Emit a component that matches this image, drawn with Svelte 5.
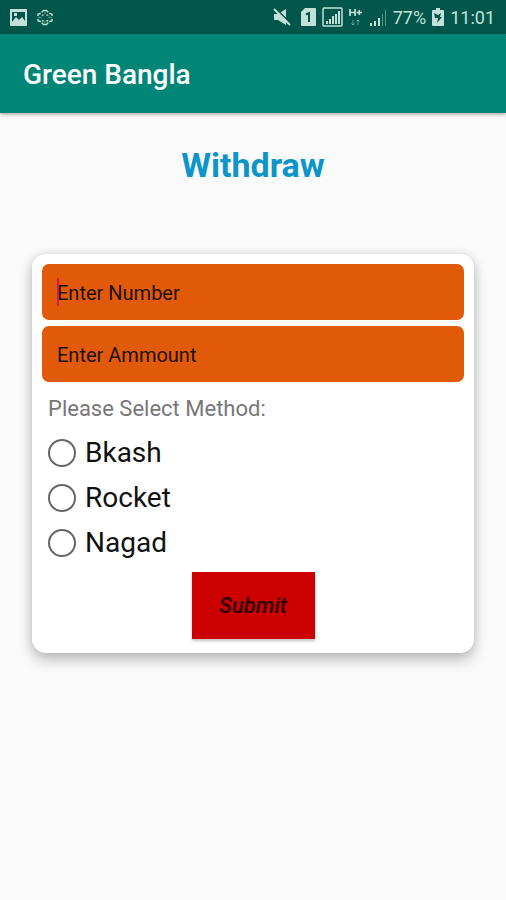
<script lang="ts">
  let number = "";
  let amount = "";
  let method = "";
  let numberActive = true;

  const methods = ["Bkash", "Rocket", "Nagad"];
</script>

<div class="status-bar">
  <div class="status-group left">
    <svg width="17" height="17" viewBox="0 0 17 17">
      <path
        fill="currentColor"
        fill-rule="evenodd"
        d="M1 0h15a1 1 0 0 1 1 1v15a1 1 0 0 1-1 1H1a1 1 0 0 1-1-1V1a1 1 0 0 1 1-1zM2 3v10l4-5 3 3 3-3 3 4V3zM4 4h3v3H4z"
      />
    </svg>
    <svg width="16" height="17" viewBox="0 0 17 17" fill="none" stroke="currentColor" stroke-width="1.500">
      <path d="M5 3l2-2h3l2 2M5 14l2 2h3l2-2M1 7V5l3-1M16 7V5l-3-1M1 10v2l3 1M16 10v2l-3 1M5 6h2M10 6h2M5 12h2M10 12h2" />
      <path d="M1 8.500h4M12 8.500h4M8.500 3v2M8.500 12v2" stroke-opacity="0.4" />
    </svg>
  </div>

  <div class="status-group right">
    <svg width="18" height="18" viewBox="0 0 18 18">
      <path fill="currentColor" d="M1 6h4l8-5v16l-8-5H1z" />
      <path d="M2 0l16 16" stroke="#00564a" stroke-width="2" />
      <path d="M1 1l16 16" stroke="currentColor" stroke-width="2" />
    </svg>
    <svg class="sim" width="15" height="18" viewBox="0 0 15 18">
      <path fill="currentColor" d="M4 0h10a1 1 0 0 1 1 1v16a1 1 0 0 1-1 1H1a1 1 0 0 1-1-1V4z" />
      <path d="M5 6.500L8 5v9" fill="none" stroke="#00564a" stroke-width="2" />
    </svg>
    <svg width="21" height="20" viewBox="0 0 21 20">
      <rect x="1" y="1" width="19" height="18" rx="1" fill="none" stroke="currentColor" stroke-width="1.500" />
      <path fill="currentColor" d="M4 14h2v3H4zM7 12h2v5H7zM10 9h2v8h-2zM13 7h2v10h-2zM16 4h2v13h-2z" />
    </svg>
    <svg class="data" width="13" height="18" viewBox="0 0 13 18" fill="none" stroke="currentColor">
      <path stroke-width="1.700" d="M1 1v7M6 1v7M1 4.500h5M7.500 4.500H13M10.300 2v5" />
      <path stroke-width="1" stroke-opacity="0.5" d="M4 12v5M2.500 15.500L4 17l1.500-1.500M9 17v-5M7.500 13.500L9 12l1.500 1.500" />
    </svg>
    <svg class="signal" width="17" height="17" viewBox="0 0 17 17" fill="currentColor">
      <path d="M0 14h2v3H0zM4 12h2v5H4zM8 9h2v8H8z" />
      <path fill-opacity="0.45" d="M12 5h1v12h-1zM15 1h1v16h-1z" />
    </svg>
    <span class="battery-level">77%</span>
    <svg width="12" height="18" viewBox="0 0 12 18">
      <path fill="currentColor" d="M4 0h4v2h3a1 1 0 0 1 1 1v14a1 1 0 0 1-1 1H1a1 1 0 0 1-1-1V3a1 1 0 0 1 1-1h3z" />
      <path fill="#00564a" d="M2 5l4 2 3-2-1 4h2l-5 6 1-5H3z" />
    </svg>
    <span class="clock">11:01</span>
  </div>
</div>

<header class="app-bar">Green Bangla</header>

<main>
  <h1>Withdraw</h1>

  <form class="card" on:submit|preventDefault>
    <div class="field">
      <input
        type="text"
        inputmode="numeric"
        placeholder="Enter Number"
        aria-label="Enter Number"
        bind:value={number}
        on:focus={() => (numberActive = false)}
      />
      {#if numberActive && !number}
        <span class="caret"></span>
      {/if}
    </div>
    <div class="field">
      <input
        type="text"
        inputmode="decimal"
        placeholder="Enter Ammount"
        aria-label="Enter Ammount"
        bind:value={amount}
        on:focus={() => (numberActive = false)}
      />
    </div>

    <fieldset>
      <legend>Please Select Method:</legend>
      {#each methods as name}
        <label>
          <input type="radio" name="method" value={name} bind:group={method} />
          {name}
        </label>
      {/each}
    </fieldset>

    <button type="submit">Submit</button>
  </form>
</main>

<style>
  :global(body) {
    background: #fafafa;
    font-family: Roboto, "Liberation Sans", sans-serif;
  }

  .status-bar {
    display: flex;
    justify-content: space-between;
    align-items: center;
    height: 34px;
    padding: 0 11px 0 10px;
    background: #00564a;
    color: #c5e0da;
    font-size: 18px;
  }

  .status-group {
    display: flex;
    align-items: center;
  }

  .left {
    gap: 10px;
  }

  .right {
    gap: 6px;
  }

  .sim {
    margin-left: 4px;
  }

  .signal {
    margin-left: 2px;
  }

  .app-bar {
    padding: 2px 23px 0;
    background: #008577;
    color: #fff;
    font-size: 28px;
    font-weight: 500;
    line-height: 77px;
    box-shadow: 0 1px 4px rgba(0, 0, 0, 0.4);
  }

  main {
    padding: 32px 32px;
  }

  h1 {
    margin: 0 0 68px;
    color: #0d95c9;
    font-size: 34px;
    font-weight: 700;
    line-height: 41px;
    text-align: center;
  }

  .card {
    display: flex;
    flex-direction: column;
    gap: 6px;
    padding: 10px 10px 14px;
    border-radius: 14px;
    background: #fff;
    box-shadow:
      0 7px 14px rgba(0, 0, 0, 0.24),
      0 0 10px rgba(0, 0, 0, 0.1);
  }

  .field {
    position: relative;
  }

  .field input {
    display: block;
    width: 100%;
    height: 56px;
    padding: 2px 15px 0;
    box-sizing: border-box;
    border: 0;
    border-radius: 7px;
    outline: none;
    background: #e05a0a;
    color: #1a0a00;
    caret-color: #d81b60;
    font-family: inherit;
    font-size: 20px;
  }

  .field input::placeholder {
    color: #1f1008;
    opacity: 1;
  }

  .caret {
    position: absolute;
    top: 14px;
    left: 15px;
    width: 2px;
    height: 28px;
    background: #d8174e;
  }

  fieldset {
    margin: 0;
    padding: 0 6px 1px;
    border: 0;
  }

  legend {
    padding: 5px 0;
    color: #777;
    font-size: 22px;
    line-height: 32px;
  }

  label {
    display: flex;
    align-items: center;
    gap: 9px;
    color: #111;
    font-size: 28px;
    line-height: 45px;
  }

  input[type="radio"] {
    appearance: none;
    width: 28px;
    height: 28px;
    margin: 0;
    border: 2px solid #666;
    border-radius: 50%;
  }

  input[type="radio"]:checked {
    border-color: #d81b60;
    background: radial-gradient(#d81b60 50%, transparent 55%);
  }

  button {
    align-self: center;
    min-width: 123px;
    height: 67px;
    padding: 0 20px;
    border: 0;
    background: #cc0000;
    color: #2a0000;
    font-family: inherit;
    font-size: 22px;
    font-style: italic;
    font-weight: 500;
    box-shadow: 0 2px 3px rgba(0, 0, 0, 0.25);
  }
</style>
